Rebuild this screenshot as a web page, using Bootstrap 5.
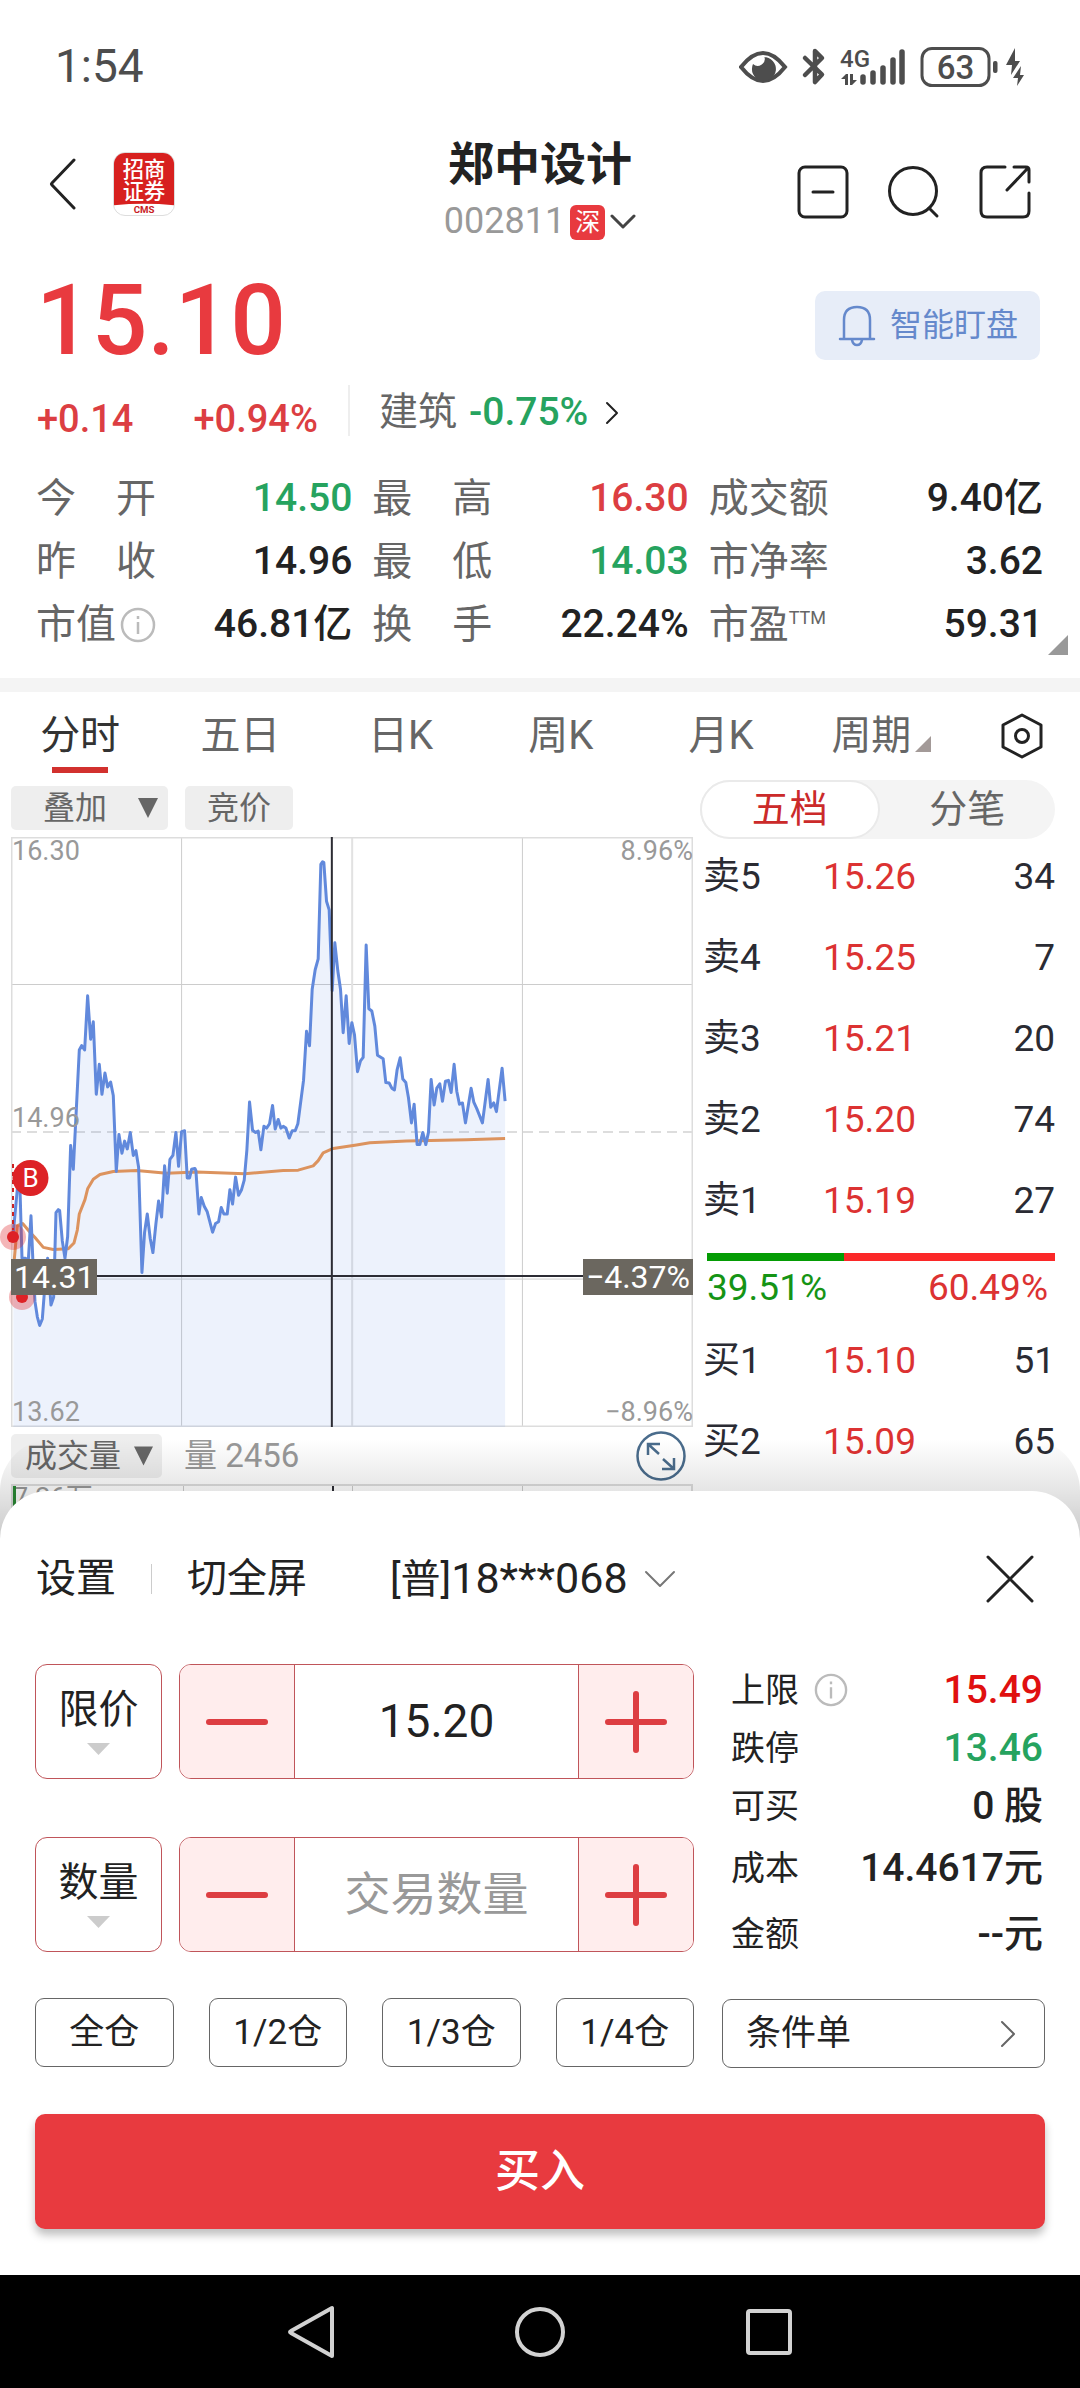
<!DOCTYPE html>
<html lang="zh-CN">
<head>
<meta charset="utf-8">
<meta name="viewport" content="width=device-width, initial-scale=1">
<title>郑中设计 002811</title>
<link href="https://cdn.jsdelivr.net/npm/bootstrap@5.3.0/dist/css/bootstrap.min.css" rel="stylesheet">
<style>
:root{--up:#dc3e42;--down:#26a35f;--ink:#222;--soft:#666;--faint:#999;--brand:#e83a3f}
body{font-family:Roboto,"Noto Sans CJK SC",sans-serif;color:var(--ink);background:#fff;font-size:40px;line-height:1.2}
svg{display:block;flex:none}
button,select,input{font-family:inherit;color:inherit}
.plain{border:0;background:none;padding:0;line-height:1.2}
.up{color:var(--up)}.down{color:var(--down)}.soft{color:var(--soft)}.faint{color:var(--faint)}
.line-ico{fill:none;stroke:#222;stroke-width:3;stroke-linecap:round;stroke-linejoin:round}

.statusbar{height:134px;padding:0 51px 0 55px;color:#4d4d4d;font-size:46px}
.topbar{height:116px;padding:0 49px;display:grid;grid-template-columns:1fr auto 1fr;align-items:center}
.brand-col{gap:36px}
.tool-col{gap:39px}
.stock-name{font-size:46px;font-weight:700;line-height:60px;margin:0}
.stock-code{font-size:36px;height:56px;gap:5px}
.market-tag{background:var(--brand);color:#fff;width:35px;height:35px;border-radius:6px;font-size:25px;line-height:35px;text-align:center}
.app-logo{width:62px;height:64px;border-radius:12px;background:#fff;border:1px solid #ddd;overflow:hidden}

.price-row{padding:41px 40px 25px 36px}
.last-price{font-size:98px;line-height:60px;font-weight:500;color:var(--brand)}
.watch-btn{height:69px;border-radius:10px;background:#e7edf8;color:#6589cc;font-size:32px;padding:0 22px 0 23px;gap:14px}
.change-row{height:51px;padding:0 37px}
.change-left{width:313px;border-right:2px solid #eee;font-weight:500;font-size:38px;padding-top:12px;gap:60px}
.sector{padding:4px 0 0 29px;gap:12px;font-size:39px}
.sector .down,.stats .val{font-weight:500}
.stats{padding:31px 37px 22px 36px;display:grid;grid-template-columns:316fr 316fr 334fr;column-gap:20px;border-bottom:14px solid #f4f4f4}
.stats>div{height:63px}
.stats .val{font-size:39px}
.corner{right:12px;bottom:37px}
sup.ttm{font-size:18px;top:-14px}

.tabs{height:88px;padding-right:6px}
.tabs button{flex:161 1 0;height:88px;position:relative;color:var(--soft)}
.tabs button.gear{flex:105 1 0}
.tabs .current{color:#333}
.tabs .current::after{content:"";position:absolute;left:50%;margin-left:-28px;width:56px;height:6px;bottom:7px;background:#d2312e}

.quote{height:761px;overflow:hidden;padding-right:25px;gap:7px}
.chart-col{flex:682 1 0;min-width:0;margin-left:11px;padding-top:6px}
.book-col{flex:355 1 0;min-width:0}
.chips{gap:17px}
.chip{background:#eee;color:var(--soft);border-radius:5px;height:44px;font-size:32px;line-height:44px}
.overlay-chip{padding:0 10px 0 32px;gap:31px}
.auction-chip{padding:0 22px}
.vol-chip{padding:0 9px 0 14px;gap:13px}
.vol-bar{margin-top:7px;height:43px;padding-right:7px}
.vol-num{font-size:33px;margin-left:22px}
.plot{height:590px;margin-top:7px;position:relative;font-size:27px;color:var(--faint)}
.plot svg.curve{width:100%;height:100%}
.curve *{vector-effect:non-scaling-stroke}
.lab{position:absolute;line-height:30px}
.cursor-lab{position:absolute;background:#6b675f;color:#fff;font-size:32px;line-height:36px;padding:0 3px;top:422px}
.trades{position:absolute;left:-11px;top:320px}
.vol-plot{height:60px;margin-top:7px;border:2px solid #ddd;border-bottom:0;position:relative;font-size:27px;line-height:24px}
.vol-plot i{position:absolute;top:0;bottom:0;width:1px;background:#ccc}
.vol-plot .bar-first{left:0;width:3px;background:#2a8a35}

.seg{height:59px;border-radius:30px;background:#f4f4f4;margin-bottom:-2px}
.seg button{flex:1;height:59px;font-size:38px;color:var(--soft);border-radius:30px}
.seg .on{background:#fff;border:2px solid #eaeaea;color:#cb2a2a}
.level{height:81px;margin-left:3px;font-size:37px;color:#2a2b33;display:grid;grid-template-columns:120px 1fr auto;align-items:center}
.level b{font-weight:400;color:#dc3232}
.power{height:8px;margin:11px 0 0 7px}
.power .sell{background:#049c04}
.power .buyers{background:#fb2828}
.power-text{height:60px;line-height:54px;font-size:37px;margin-left:7px;padding-right:7px;color:#dc3232}
.power-text .sell{color:#159415}

.sheet-wrap{margin-top:-50px;position:relative;z-index:2}
.sheet-shade{position:absolute;left:0;right:0;top:-52px;height:104px;border-radius:52px 52px 0 0;background:linear-gradient(rgba(0,0,0,0),rgba(0,0,0,.1) 50%,rgba(0,0,0,.22))}
.sheet{position:relative;background:#fff;border-radius:48px 48px 0 0;padding:53px 35px 46px}
.sheet-head{height:70px;margin-bottom:50px;padding:0 11px 0 1px}
.split{width:1px;height:30px;background:#ccc;margin:0 35px}
.account{margin-left:83px;gap:16px}
.account span{font-size:43px}
.form-col{flex:659 1 0;min-width:0}
.side-col{flex:323 1 0;min-width:0}
.two-col{gap:28px}
.two-col.later,.buy{margin-top:46px}
.entry{height:115px;gap:17px}
.entry+.entry{margin-top:58px}
.kind{position:relative;width:127px;flex:none}
.kind select{width:100%;height:115px;border:1px solid #c0555a;border-radius:12px;background:#fff;appearance:none;text-align:center;text-align-last:center;padding:0 0 24px;line-height:1.2}
.kind svg{position:absolute;left:52px;top:79px;pointer-events:none}
.stepper{flex:1;min-width:0;border:1px solid #c0555a;border-radius:12px;overflow:hidden;height:115px}
.stepper button{width:114px;flex:none;background:#ffeded;display:flex;align-items:center;justify-content:center}
.stepper input{flex:1;min-width:0;border:solid #c0555a;border-width:0 1px;text-align:center;font-size:46px;padding:0;outline:0;background:#fff}
.stepper input::placeholder{color:var(--faint);opacity:1}
.red-ico{stroke:#dd3e42;stroke-width:6;stroke-linecap:round;fill:none}
.facts{margin:-3px 2px -18px 9px}
.facts div{height:58px;display:flex;align-items:center}
.facts .tall{height:66px}
.facts dt{font-weight:400;font-size:34px}
.facts svg{margin-left:15px}
.facts dd{margin:0 0 0 auto;font-weight:500;font-size:39px}
.facts .limit{color:#e01010}
.outline{border:1px solid #666;border-radius:9px;background:#fff;height:69px;font-size:35px;line-height:1.2}
.quick{gap:35px}
.quick .outline{flex:1;padding:0}
.cond{padding:0 27px 0 23px;margin-top:1px}
.buy{width:100%;height:115px;border:0;border-radius:10px;background:var(--brand);color:#fff;font-size:45px;font-weight:500;box-shadow:0 6px 8px rgba(0,0,0,.25)}
.sysnav{height:114px;background:#000}
.sysnav svg{fill:none;stroke:#d2d2d2;stroke-width:4;stroke-linejoin:round}
.sysnav button{width:229px;display:flex;justify-content:center}
</style>
</head>
<body>

<div class="statusbar d-flex align-items-center justify-content-between">
  <span>1:54</span>
  <svg width="290" height="44" viewBox="739 45 290 44" fill="#4d4d4d" aria-label="状态">
    <path d="M741 67Q763 39 785 67Q763 95 741 67Z" fill="none" stroke="#4d4d4d" stroke-width="4"/>
    <path d="M763.500 57a12 12 0 1 1-10.500 7a7 7 0 0 0 11.500-7Z"/>
    <path d="M805 58L822 74.500L815 82V51L822 58L805 75" fill="none" stroke="#4d4d4d" stroke-width="4.500" stroke-linejoin="round" stroke-linecap="round"/>
    <text x="840" y="67" font-size="24" font-weight="500">4G</text>
    <path d="M841 79l5-5h2v11h-3v-6zM850 74h3v6h4l-5 5h-2z"/>
    <path d="M863 77v5M873 73v9M883 68v14M893 60v22M902 52v30" stroke="#4d4d4d" stroke-width="5.500" stroke-linecap="round"/>
    <rect x="922" y="48.500" width="67" height="37" rx="10" fill="none" stroke="#4d4d4d" stroke-width="3"/>
    <text x="955.500" y="79" font-size="33" font-weight="500" text-anchor="middle">63</text>
    <rect x="993" y="61" width="4.500" height="12" rx="2"/>
    <path d="M1015 48L1006 65h6l-1 10 9-14h-5ZM1021 66l-8 12h5l-1 8 7-11h-4Z"/>
  </svg>
</div>

<header class="topbar">
  <div class="brand-col d-flex align-items-center pb-3">
    <button class="plain" aria-label="返回" type="button"><svg width="28" height="54" viewBox="0 0 28 54" class="line-ico"><path d="M25 3L3 26Q2 27 3 28L25 51"/></svg></button>
    <svg class="app-logo" viewBox="0 0 62 64" role="img" aria-label="招商证券 CMS">
      <path d="M0 0H62V54Q31 51 0 54Z" fill="#d7201f"/>
      <text x="31" y="25" text-anchor="middle" font-size="22" font-weight="500" fill="#fff">招商</text>
      <text x="31" y="48" text-anchor="middle" font-size="22" font-weight="500" fill="#fff">证券</text>
      <text x="31" y="62" text-anchor="middle" font-size="10" font-weight="700" fill="#c8201f">CMS</text>
    </svg>
  </div>
  <div class="text-center">
    <h1 class="stock-name">郑中设计</h1>
    <div class="stock-code faint d-flex align-items-center justify-content-center">
      <span>002811</span><span class="market-tag">深</span>
      <svg width="26" height="16" viewBox="0 0 26 16" class="line-ico"><path d="M2 2L13 13L24 2" stroke="#444"/></svg>
    </div>
  </div>
  <div class="tool-col d-flex justify-content-end">
    <button class="plain" aria-label="移出自选" type="button"><svg width="52" height="54" viewBox="0 0 52 54" class="line-ico"><rect x="2" y="2" width="48" height="50" rx="6"/><path d="M16 27H36"/></svg></button>
    <button class="plain" aria-label="搜索" type="button"><svg width="52" height="54" viewBox="0 0 52 54" class="line-ico"><circle cx="25" cy="26" r="23.500"/><path d="M41 43L49 51"/></svg></button>
    <button class="plain" aria-label="分享" type="button"><svg width="52" height="54" viewBox="0 0 52 54" class="line-ico"><path d="M26 2H8Q2 2 2 8V46Q2 52 8 52H44Q50 52 50 46V28M35 2H47Q50 2 50 5V17M48 4L28 25"/></svg></button>
  </div>
</header>

<section class="price-row d-flex align-items-start justify-content-between">
  <div class="last-price">15.10</div>
  <button class="watch-btn plain d-flex align-items-center" type="button">
    <svg width="38" height="42" viewBox="0 0 38 42" fill="none" stroke="#6589cc" stroke-width="2.500" stroke-linecap="round"><path d="M6 34V15Q6 2 19 2T32 15V34M2 34H36M14 35Q15 40 19 40T24 35"/></svg>
    智能盯盘
  </button>
</section>
<section class="change-row d-flex">
  <div class="change-left up d-flex"><span>+0.14</span><span>+0.94%</span></div>
  <a href="#sector" class="sector d-flex align-items-center text-decoration-none"><span class="soft">建筑</span><span class="down">-0.75%</span>
    <svg width="16" height="26" viewBox="0 0 16 26" class="line-ico ms-1"><path d="M3 3L13 13L3 23" stroke-width="2"/></svg></a>
</section>

<section class="position-relative">
  <div class="stats">
    <div class="d-flex align-items-center justify-content-between"><span class="soft">今　开</span><span class="val down">14.50</span></div>
    <div class="d-flex align-items-center justify-content-between"><span class="soft">最　高</span><span class="val up">16.30</span></div>
    <div class="d-flex align-items-center justify-content-between"><span class="soft">成交额</span><span class="val">9.40亿</span></div>
    <div class="d-flex align-items-center justify-content-between"><span class="soft">昨　收</span><span class="val">14.96</span></div>
    <div class="d-flex align-items-center justify-content-between"><span class="soft">最　低</span><span class="val down">14.03</span></div>
    <div class="d-flex align-items-center justify-content-between"><span class="soft">市净率</span><span class="val">3.62</span></div>
    <div class="d-flex align-items-center"><span class="soft">市值</span>
      <svg class="ms-1" width="36" height="36" viewBox="0 0 36 36" fill="none" stroke="#bbb" stroke-width="2.500"><circle cx="18" cy="18" r="16"/><path d="M18 15V27M18 9V12"/></svg>
      <span class="val ms-auto">46.81亿</span></div>
    <div class="d-flex align-items-center justify-content-between"><span class="soft">换　手</span><span class="val">22.24%</span></div>
    <div class="d-flex align-items-center justify-content-between"><span class="soft">市盈<sup class="ttm">TTM</sup></span><span class="val">59.31</span></div>
  </div>
  <svg class="corner position-absolute" width="20" height="20" viewBox="0 0 20 20"><path d="M20 0V20H0Z" fill="#999"/></svg>
</section>

<nav class="tabs d-flex">
  <button class="plain current" type="button">分时</button>
  <button class="plain" type="button">五日</button>
  <button class="plain" type="button">日K</button>
  <button class="plain" type="button">周K</button>
  <button class="plain" type="button">月K</button>
  <button class="plain d-flex align-items-center justify-content-center pe-2" type="button">周期<svg class="mt-3 ms-1" width="16" height="16" viewBox="0 0 16 16"><path d="M16 0V16H0Z" fill="#a39a98"/></svg></button>
  <button class="plain gear d-flex align-items-center justify-content-center" aria-label="设置指标" type="button"><svg width="44" height="46" viewBox="0 0 44 46" class="line-ico"><path d="M22 2L41 12V34L22 44L3 34V12Z"/><circle cx="22" cy="23" r="6.500"/></svg></button>
</nav>

<section class="quote d-flex">
  <div class="chart-col">
    <div class="chips d-flex">
      <button class="chip overlay-chip plain d-flex align-items-center" type="button">叠加<svg width="20" height="20" viewBox="0 0 20 20"><path d="M0 0H20L10 20Z" fill="#666"/></svg></button>
      <button class="chip auction-chip plain" type="button">竞价</button>
    </div>

    <div class="plot">
      <svg class="curve" viewBox="33 39 2047 1360" preserveAspectRatio="none" fill="none" role="img" aria-label="分时走势">
        <path d="M33 379H2080M33 1058H2080M545 39V1399M1568 39V1399" stroke="#ccc" stroke-width="1"/>
        <path d="M1057 39V1399" stroke="#e2e2e2" stroke-width="2"/>
        <path d="M33 719H2080" stroke="#ddd" stroke-width="2" stroke-dasharray="10 6"/>
        <path d="M33 39H2080V1399H33Z" stroke="#ddd" stroke-width="3"/>
        <path id="area" fill="#5f87e0" fill-opacity=".11"/>
        <path d="M42 1020L52 935L68 930L90 950L105 962L130 985L160 990L205 988L222 975L232 945L238 908L255 875L263 850L280 828L300 817L340 810L410 808L500 814L590 811L735 815L850 808L895 807L940 797L955 785L970 767L1000 757L1070 749L1110 744L1220 740L1400 737L1516 734" stroke="#dc935e" stroke-width="3" stroke-linejoin="round"/>
        <path id="line" stroke="#6189dc" stroke-width="3" stroke-linejoin="round"/>
        <path d="M33 1051H2080M996 39V1399" stroke="#2c2c34" stroke-width="2"/>
      </svg>
      <span class="lab" style="left:1px;top:-1px">16.30</span>
      <span class="lab" style="right:0;top:-1px">8.96%</span>
      <span class="lab" style="left:1px;top:266px">14.96</span>
      <span class="lab" style="left:1px;bottom:0">13.62</span>
      <span class="lab" style="right:0;bottom:0">−8.96%</span>
      <svg class="trades" width="60" height="160" viewBox="0 1157 60 160">
        <path d="M13 1164V1230" stroke="#c22" stroke-width="2" stroke-dasharray="4 4"/>
        <circle cx="30.500" cy="1178" r="18" fill="#dd2226"/>
        <text x="30.500" y="1187" font-size="26" fill="#fff" text-anchor="middle">B</text>
        <circle cx="13" cy="1237" r="13" fill="#dd2226" fill-opacity=".33"/><circle cx="13" cy="1237" r="6" fill="#dd2226"/>
        <circle cx="22" cy="1297" r="13" fill="#dd2226" fill-opacity=".33"/><circle cx="22" cy="1297" r="6" fill="#dd2226"/>
      </svg>
      <span class="cursor-lab" style="left:0">14.31</span>
      <span class="cursor-lab" style="right:0">−4.37%</span>
    </div>

    <div class="vol-bar d-flex align-items-center">
      <button class="chip vol-chip plain d-flex align-items-center" type="button">成交量<svg width="19" height="20" viewBox="0 0 20 20"><path d="M0 0H20L10 20Z" fill="#666"/></svg></button>
      <span class="vol-num faint">量 2456</span>
      <button class="plain ms-auto" aria-label="放大" type="button"><svg width="50" height="50" viewBox="0 0 50 50" fill="none" stroke="#4a6c8c" stroke-width="2.500"><circle cx="25" cy="25" r="23.500"/><path d="M12 24V13H24M12 13L23 23M38 27V38H26M38 38L27 28"/></svg></button>
    </div>
    <div class="vol-plot faint">
      <i class="bar-first"></i><i style="left:25%"></i><i style="left:50%"></i><i style="left:75%"></i><i style="left:47%;width:2px;background:#2c2c34"></i>
      <span>7.26万</span>
    </div>
  </div>

  <div class="book-col">
    <div class="seg d-flex"><button class="plain on" type="button">五档</button><button class="plain" type="button">分笔</button></div>
    <div class="level"><span>卖5</span><b>15.26</b><span>34</span></div>
    <div class="level"><span>卖4</span><b>15.25</b><span>7</span></div>
    <div class="level"><span>卖3</span><b>15.21</b><span>20</span></div>
    <div class="level"><span>卖2</span><b>15.20</b><span>74</span></div>
    <div class="level"><span>卖1</span><b>15.19</b><span>27</span></div>
    <div class="power d-flex"><div class="sell" style="width:39.51%"></div><div class="buyers" style="width:60.49%"></div></div>
    <div class="power-text d-flex justify-content-between"><span class="sell">39.51%</span><span>60.49%</span></div>
    <div class="level"><span>买1</span><b>15.10</b><span>51</span></div>
    <div class="level"><span>买2</span><b>15.09</b><span>65</span></div>
  </div>
</section>

<div class="sheet-wrap">
  <div class="sheet-shade"></div>
  <section class="sheet">
    <div class="sheet-head d-flex align-items-center">
      <button class="plain" type="button">设置</button><span class="split"></span><button class="plain" type="button">切全屏</button>
      <button class="account plain d-flex align-items-center" type="button"><div>[普]<span>18***068</span></div><svg width="32" height="18" viewBox="0 0 32 18" class="line-ico"><path d="M2 2L16 16L30 2" stroke="#777" stroke-width="2"/></svg></button>
      <button class="plain ms-auto" aria-label="关闭" type="button"><svg width="48" height="48" viewBox="0 0 48 48" class="line-ico"><path d="M2 2L46 46M46 2L2 46"/></svg></button>
    </div>

    <div class="two-col d-flex">
      <div class="form-col">
        <div class="entry d-flex">
          <div class="kind"><select aria-label="价格类型"><option>限价</option></select><svg width="23" height="12" viewBox="0 0 23 12"><path d="M0 0H23L11.500 12Z" fill="#ccc"/></svg></div>
          <div class="stepper d-flex">
            <button class="plain" aria-label="减价" type="button"><svg width="66" height="66" viewBox="0 0 66 66" class="red-ico"><path d="M5 33H61"/></svg></button>
            <input type="text" aria-label="价格" value="15.20">
            <button class="plain" aria-label="加价" type="button"><svg width="66" height="66" viewBox="0 0 66 66" class="red-ico"><path d="M5 33H61M33 5V61"/></svg></button>
          </div>
        </div>
        <div class="entry d-flex">
          <div class="kind"><select aria-label="数量类型"><option>数量</option></select><svg width="23" height="12" viewBox="0 0 23 12"><path d="M0 0H23L11.500 12Z" fill="#ccc"/></svg></div>
          <div class="stepper d-flex">
            <button class="plain" aria-label="减少" type="button"><svg width="66" height="66" viewBox="0 0 66 66" class="red-ico"><path d="M5 33H61"/></svg></button>
            <input type="text" aria-label="交易数量" placeholder="交易数量">
            <button class="plain" aria-label="增加" type="button"><svg width="66" height="66" viewBox="0 0 66 66" class="red-ico"><path d="M5 33H61M33 5V61"/></svg></button>
          </div>
        </div>
      </div>
      <div class="side-col">
        <dl class="facts">
          <div><dt>上限</dt><svg width="34" height="34" viewBox="0 0 36 36" fill="none" stroke="#bbb" stroke-width="2.500"><circle cx="18" cy="18" r="16"/><path d="M18 15V27M18 9V12"/></svg><dd class="limit">15.49</dd></div>
          <div><dt>跌停</dt><dd class="down">13.46</dd></div>
          <div><dt>可买</dt><dd>0 股</dd></div>
          <div class="tall"><dt>成本</dt><dd>14.4617元</dd></div>
          <div class="tall"><dt>金额</dt><dd>--元</dd></div>
        </dl>
      </div>
    </div>

    <div class="two-col later d-flex">
      <div class="form-col quick d-flex">
        <button class="outline" type="button">全仓</button><button class="outline" type="button">1/2仓</button><button class="outline" type="button">1/3仓</button><button class="outline" type="button">1/4仓</button>
      </div>
      <div class="side-col">
        <button class="outline cond w-100 d-flex align-items-center justify-content-between" type="button">条件单<svg width="18" height="30" viewBox="0 0 18 30" class="line-ico"><path d="M3 3L15 15L3 27" stroke="#666" stroke-width="2"/></svg></button>
      </div>
    </div>
    <button class="buy d-block" type="button">买入</button>
  </section>
</div>

<footer class="sysnav d-flex align-items-center justify-content-center">
  <button class="plain" aria-label="返回键" type="button"><svg width="50" height="54" viewBox="0 0 50 54"><path d="M46 3V51L5 28Q3 27 5 26Z"/></svg></button>
  <button class="plain" aria-label="主页键" type="button"><svg width="54" height="54" viewBox="0 0 54 54"><circle cx="27" cy="27" r="23"/></svg></button>
  <button class="plain" aria-label="任务键" type="button"><svg width="50" height="50" viewBox="0 0 50 50"><rect x="4" y="4" width="42" height="42" rx="2"/></svg></button>
</footer>

<script src="https://cdn.jsdelivr.net/npm/bootstrap@5.3.0/dist/js/bootstrap.bundle.min.js"></script>
<script>
// Intraday price samples as x,y pairs in the chart's viewBox.
const pts="40,950 46,900 52,850 60,850 66,1010 76,1010 85,1015 93,912 100,1040 105,1110 112,1145 119,1165 127,1150 133,1090 143,1010 153,1118 161,1100 168,905 175,898 179,900 187,970 195,1010 203,960 212,750 220,805 238,530 245,520 254,530 263,405 272,505 280,465 289,632 298,563 306,632 315,583 323,615 332,604 340,635 349,810 357,725 366,768 374,740 382,758 391,720 400,773 408,762 416,800 426,1043 434,950 442,908 451,965 459,997 468,930 476,878 485,915 494,797 502,860 510,782 519,773 528,720 536,798 545,718 554,716 562,825 569,825 575,805 585,803 588,808 597,908 604,870 613,890 622,903 638,950 647,930 656,926 664,893 672,908 682,908 690,852 698,885 707,823 716,865 725,852 733,830 741,760 749,650 758,715 767,720 775,717 783,760 792,706 800,710 809,700 818,658 826,712 835,690 843,710 850,706 858,710 868,733 877,716 886,716 894,700 911,600 920,487 929,520 937,390 946,345 955,320 963,102 968,96 972,98 980,187 988,207 997,393 1005,283 1014,348 1022,390 1030,490 1039,405 1048,515 1056,467 1064,495 1073,580 1082,555 1090,547 1099,288 1107,435 1116,440 1125,475 1133,542 1150,550 1158,605 1168,606 1176,618 1184,622 1192,575 1201,548 1209,597 1218,605 1226,640 1235,698 1243,655 1252,748 1260,748 1269,720 1278,748 1286,720 1294,598 1303,657 1311,618 1320,608 1328,648 1337,602 1346,600 1354,628 1363,563 1371,625 1379,655 1388,652 1397,698 1414,618 1422,650 1431,665 1448,698 1465,598 1473,662 1482,652 1490,672 1507,572 1516,648";
document.getElementById("line").setAttribute("d","M"+pts);
document.getElementById("area").setAttribute("d","M"+pts+" 1516,1399 40,1399Z");
</script>
</body>
</html>
